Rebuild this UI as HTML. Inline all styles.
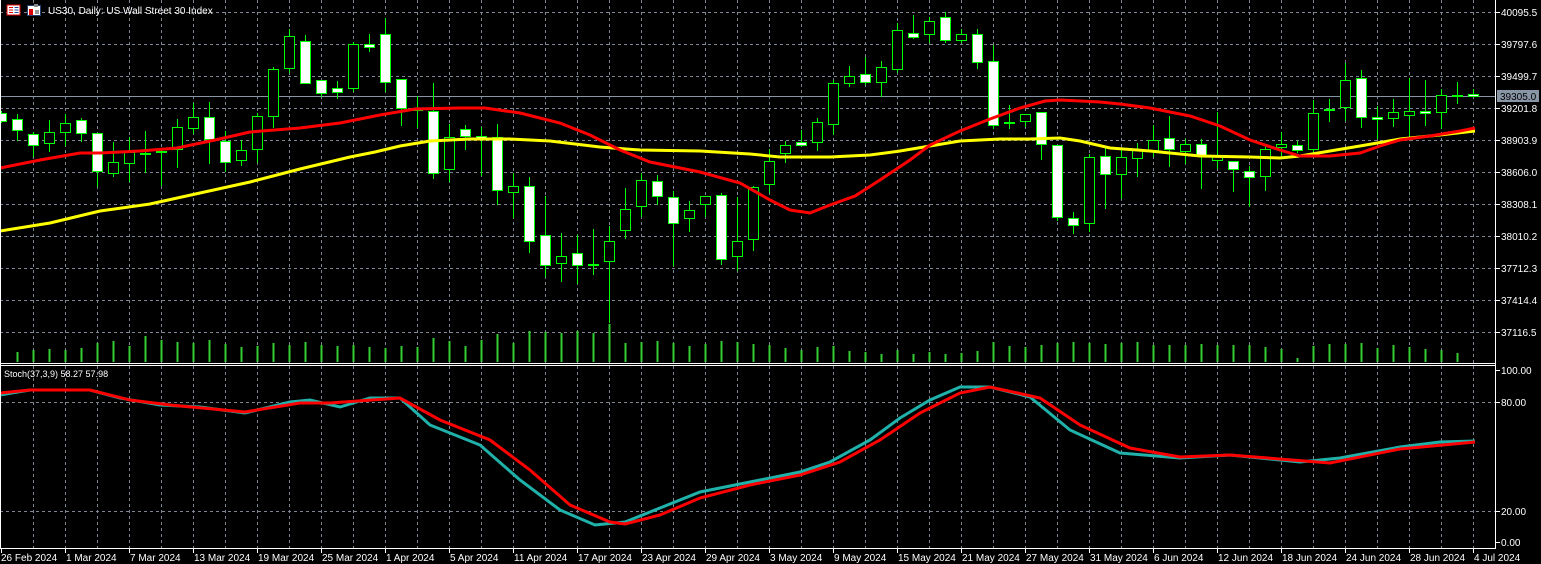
<!DOCTYPE html>
<html><head><meta charset="utf-8"><style>
html,body{margin:0;padding:0;background:#000;width:1541px;height:564px;overflow:hidden}
svg{display:block}
text{font-family:"Liberation Sans","DejaVu Sans",sans-serif;font-size:10px;fill:#fff}
.g{stroke:#7d8593;stroke-width:1;stroke-dasharray:3,3}
.wk{stroke:#00ff00;stroke-width:1}
.b{fill:#000;stroke:#00ff00;stroke-width:1}
.w{fill:#fff;stroke:#00ff00;stroke-width:1}
</style></head><body>
<svg width="1541" height="564" viewBox="0 0 1541 564" xmlns="http://www.w3.org/2000/svg">
<rect width="1541" height="564" fill="#000"/>
<!-- horizontal grid main -->
<g class="g">
<path d="M0 12.5H1495M0 44.5H1495M0 76.5H1495M0 108.5H1495M0 140.5H1495M0 172.5H1495M0 204.5H1495M0 236.5H1495M0 268.5H1495M0 300.5H1495M0 332.5H1495"/>
<path d="M0 402.5H1495M0 511.5H1495"/>
<path d="M33.5 0V363M65.5 0V363M97.5 0V363M129.5 0V363M161.5 0V363M193.5 0V363M225.5 0V363M257.5 0V363M289.5 0V363M321.5 0V363M353.5 0V363M385.5 0V363M417.5 0V363M449.5 0V363M481.5 0V363M513.5 0V363M545.5 0V363M577.5 0V363M609.5 0V363M641.5 0V363M673.5 0V363M705.5 0V363M737.5 0V363M769.5 0V363M801.5 0V363M833.5 0V363M865.5 0V363M897.5 0V363M929.5 0V363M961.5 0V363M993.5 0V363M1025.5 0V363M1057.5 0V363M1089.5 0V363M1121.5 0V363M1153.5 0V363M1185.5 0V363M1217.5 0V363M1249.5 0V363M1281.5 0V363M1313.5 0V363M1345.5 0V363M1377.5 0V363M1409.5 0V363M1441.5 0V363M1473.5 0V363"/>
<path d="M33.5 366V548M65.5 366V548M97.5 366V548M129.5 366V548M161.5 366V548M193.5 366V548M225.5 366V548M257.5 366V548M289.5 366V548M321.5 366V548M353.5 366V548M385.5 366V548M417.5 366V548M449.5 366V548M481.5 366V548M513.5 366V548M545.5 366V548M577.5 366V548M609.5 366V548M641.5 366V548M673.5 366V548M705.5 366V548M737.5 366V548M769.5 366V548M801.5 366V548M833.5 366V548M865.5 366V548M897.5 366V548M929.5 366V548M961.5 366V548M993.5 366V548M1025.5 366V548M1057.5 366V548M1089.5 366V548M1121.5 366V548M1153.5 366V548M1185.5 366V548M1217.5 366V548M1249.5 366V548M1281.5 366V548M1313.5 366V548M1345.5 366V548M1377.5 366V548M1409.5 366V548M1441.5 366V548M1473.5 366V548"/>
</g>
<!-- current price line -->
<path d="M0 96.5H1495" stroke="#8795a5" stroke-width="1"/>
<!-- volumes -->
<path stroke="#32cd32" stroke-width="2" fill="none" d="M17.5 352V362M33.5 350V362M49.5 349V362M65.5 350V362M81.5 348V362M97.5 343V362M113.5 341V362M129.5 346V362M145.5 336V362M161.5 340V362M177.5 342V362M193.5 343V362M209.5 340V362M225.5 344V362M241.5 347V362M257.5 346V362M273.5 343V362M289.5 345V362M305.5 342V362M321.5 345V362M337.5 346V362M353.5 345V362M369.5 347V362M385.5 348V362M401.5 346V362M417.5 347V362M433.5 338V362M449.5 341V362M465.5 346V362M481.5 340V362M497.5 334V362M513.5 343V362M529.5 331V362M545.5 332V362M561.5 333V362M577.5 331V362M593.5 333V362M609.5 324V362M625.5 343V362M641.5 342V362M657.5 341V362M673.5 343V362M689.5 346V362M705.5 344V362M721.5 341V362M737.5 342V362M753.5 344V362M769.5 345V362M785.5 348V362M801.5 350V362M817.5 347V362M833.5 346V362M849.5 351V362M865.5 352V362M881.5 354V362M897.5 350V362M913.5 354V362M929.5 352V362M945.5 354V362M961.5 353V362M977.5 351V362M993.5 342V362M1009.5 346V362M1025.5 347V362M1041.5 345V362M1057.5 343V362M1073.5 342V362M1089.5 343V362M1105.5 344V362M1121.5 343V362M1137.5 342V362M1153.5 345V362M1169.5 345V362M1185.5 345V362M1201.5 344V362M1217.5 345V362M1233.5 345V362M1249.5 345V362M1265.5 347V362M1281.5 349V362M1297.5 358V362M1313.5 346V362M1329.5 344V362M1345.5 344V362M1361.5 343V362M1377.5 348V362M1393.5 345V362M1409.5 347V362M1425.5 349V362M1441.5 350V362M1457.5 353V362"/>
<!-- wicks -->
<path class="wk" d="M1.5 111V123M17.5 114V141M33.5 132V157M49.5 120V152M65.5 114V146M81.5 118V142M97.5 133V187M113.5 142V177M129.5 137V182M145.5 131V173M161.5 149V186M177.5 119V168M193.5 103V134M209.5 102V164M225.5 131V172M241.5 140V166M257.5 113V163M273.5 67V128M289.5 29V73M305.5 35V83M321.5 80V97M337.5 81V99M353.5 42V92M369.5 34V52M385.5 18V92M401.5 79V126M417.5 96V128M433.5 83V179M449.5 124V182M465.5 125V150M481.5 127V176M497.5 124V205M513.5 173V218M529.5 177V253M545.5 196V277M561.5 233V282M577.5 235V284M593.5 229V275M609.5 226V323M625.5 188V239M641.5 173V217M657.5 175V205M673.5 191V266M689.5 201V232M705.5 196V217M721.5 193V265M737.5 197V271M753.5 186V251M769.5 149V193M785.5 141V163M801.5 130V147M817.5 118V151M833.5 80V135M849.5 66V87M865.5 57V85M881.5 61V97M897.5 23V73M913.5 15V39M929.5 17V43M945.5 12V43M961.5 29V43M977.5 29V69M993.5 45V129M1009.5 105V129M1025.5 114V127M1041.5 112V160M1057.5 145V221M1073.5 212V234M1089.5 154V232M1105.5 148V209M1121.5 149V199M1137.5 143V177M1153.5 125V157M1169.5 116V167M1185.5 139V164M1201.5 139V189M1217.5 112V169M1233.5 161V192M1249.5 166V207M1265.5 144V191M1281.5 132V156M1297.5 141V153M1313.5 100V154M1329.5 99V122M1345.5 63V121M1361.5 70V128M1377.5 106V139M1393.5 99V127M1409.5 78V137M1425.5 80V126M1441.5 89V129M1457.5 82V104M1473.5 89V97"/>
<!-- dojis -->
<path stroke="#00ff00" stroke-width="2" d="M140 154H151M156 152H167M412 110H423M588 265H599M1004 123H1015M1324 110H1335M1452 96H1463"/>
<!-- bodies -->
<rect class="w" x="-3.5" y="113.5" width="10" height="8"/>
<rect class="w" x="12.5" y="119.5" width="10" height="11"/>
<rect class="w" x="28.5" y="134.5" width="10" height="11"/>
<rect class="b" x="44.5" y="132.5" width="10" height="11"/>
<rect class="b" x="60.5" y="123.5" width="10" height="9"/>
<rect class="w" x="76.5" y="120.5" width="10" height="13"/>
<rect class="w" x="92.5" y="133.5" width="10" height="38"/>
<rect class="b" x="108.5" y="162.5" width="10" height="11"/>
<rect class="b" x="124.5" y="152.5" width="10" height="11"/>
<rect class="b" x="172.5" y="127.5" width="10" height="22"/>
<rect class="b" x="188.5" y="117.5" width="10" height="11"/>
<rect class="w" x="204.5" y="117.5" width="10" height="22"/>
<rect class="w" x="220.5" y="141.5" width="10" height="21"/>
<rect class="b" x="236.5" y="150.5" width="10" height="10"/>
<rect class="b" x="252.5" y="116.5" width="10" height="33"/>
<rect class="b" x="268.5" y="69.5" width="10" height="47"/>
<rect class="b" x="284.5" y="36.5" width="10" height="32"/>
<rect class="w" x="300.5" y="41.5" width="10" height="42"/>
<rect class="w" x="316.5" y="80.5" width="10" height="13"/>
<rect class="w" x="332.5" y="88.5" width="10" height="4"/>
<rect class="b" x="348.5" y="44.5" width="10" height="44"/>
<rect class="w" x="364.5" y="44.5" width="10" height="3"/>
<rect class="w" x="380.5" y="34.5" width="10" height="48"/>
<rect class="w" x="396.5" y="79.5" width="10" height="29"/>
<rect class="w" x="428.5" y="111.5" width="10" height="62"/>
<rect class="b" x="444.5" y="137.5" width="10" height="32"/>
<rect class="w" x="460.5" y="129.5" width="10" height="7"/>
<rect class="w" x="476.5" y="136.5" width="10" height="2"/>
<rect class="w" x="492.5" y="137.5" width="10" height="53"/>
<rect class="b" x="508.5" y="186.5" width="10" height="6"/>
<rect class="w" x="524.5" y="186.5" width="10" height="55"/>
<rect class="w" x="540.5" y="235.5" width="10" height="30"/>
<rect class="b" x="556.5" y="256.5" width="10" height="7"/>
<rect class="w" x="572.5" y="253.5" width="10" height="12"/>
<rect class="b" x="604.5" y="241.5" width="10" height="20"/>
<rect class="b" x="620.5" y="209.5" width="10" height="21"/>
<rect class="b" x="636.5" y="180.5" width="10" height="26"/>
<rect class="w" x="652.5" y="181.5" width="10" height="15"/>
<rect class="w" x="668.5" y="197.5" width="10" height="26"/>
<rect class="b" x="684.5" y="210.5" width="10" height="8"/>
<rect class="b" x="700.5" y="196.5" width="10" height="8"/>
<rect class="w" x="716.5" y="195.5" width="10" height="64"/>
<rect class="b" x="732.5" y="241.5" width="10" height="15"/>
<rect class="b" x="748.5" y="187.5" width="10" height="52"/>
<rect class="b" x="764.5" y="161.5" width="10" height="23"/>
<rect class="b" x="780.5" y="145.5" width="10" height="8"/>
<rect class="w" x="796.5" y="142.5" width="10" height="3"/>
<rect class="b" x="812.5" y="122.5" width="10" height="20"/>
<rect class="b" x="828.5" y="83.5" width="10" height="41"/>
<rect class="b" x="844.5" y="76.5" width="10" height="7"/>
<rect class="w" x="860.5" y="74.5" width="10" height="8"/>
<rect class="b" x="876.5" y="67.5" width="10" height="15"/>
<rect class="b" x="892.5" y="30.5" width="10" height="39"/>
<rect class="w" x="908.5" y="33.5" width="10" height="4"/>
<rect class="b" x="924.5" y="21.5" width="10" height="13"/>
<rect class="w" x="940.5" y="17.5" width="10" height="23"/>
<rect class="b" x="956.5" y="34.5" width="10" height="6"/>
<rect class="w" x="972.5" y="34.5" width="10" height="28"/>
<rect class="w" x="988.5" y="61.5" width="10" height="64"/>
<rect class="b" x="1020.5" y="114.5" width="10" height="7"/>
<rect class="w" x="1036.5" y="112.5" width="10" height="32"/>
<rect class="w" x="1052.5" y="145.5" width="10" height="72"/>
<rect class="w" x="1068.5" y="218.5" width="10" height="7"/>
<rect class="b" x="1084.5" y="157.5" width="10" height="66"/>
<rect class="w" x="1100.5" y="156.5" width="10" height="18"/>
<rect class="b" x="1116.5" y="157.5" width="10" height="17"/>
<rect class="b" x="1132.5" y="149.5" width="10" height="9"/>
<rect class="b" x="1148.5" y="140.5" width="10" height="10"/>
<rect class="w" x="1164.5" y="138.5" width="10" height="11"/>
<rect class="b" x="1180.5" y="144.5" width="10" height="7"/>
<rect class="w" x="1196.5" y="144.5" width="10" height="11"/>
<rect class="b" x="1212.5" y="155.5" width="10" height="5"/>
<rect class="w" x="1228.5" y="161.5" width="10" height="8"/>
<rect class="w" x="1244.5" y="171.5" width="10" height="6"/>
<rect class="b" x="1260.5" y="149.5" width="10" height="27"/>
<rect class="b" x="1276.5" y="144.5" width="10" height="3"/>
<rect class="w" x="1292.5" y="145.5" width="10" height="5"/>
<rect class="b" x="1308.5" y="113.5" width="10" height="36"/>
<rect class="b" x="1340.5" y="80.5" width="10" height="27"/>
<rect class="w" x="1356.5" y="78.5" width="10" height="39"/>
<rect class="w" x="1372.5" y="117.5" width="10" height="2"/>
<rect class="b" x="1388.5" y="112.5" width="10" height="6"/>
<rect class="b" x="1404.5" y="111.5" width="10" height="4"/>
<rect class="w" x="1420.5" y="111.5" width="10" height="2"/>
<rect class="b" x="1436.5" y="95.5" width="10" height="17"/>
<rect class="w" x="1468.5" y="94.5" width="10" height="2"/>
<!-- MAs -->
<polyline fill="none" stroke="#ffff00" stroke-width="3" points="0,231 50,223 100,211 150,204 200,193 250,182 300,169 350,157 375,152 400,146 430,141 470,139 510,139 550,141 600,147 640,150 700,151 750,154 780,157 830,157 870,155 900,151 930,146 960,141 1000,139 1030,139 1060,138 1080,141 1110,148 1150,151 1200,156 1250,157 1280,158 1300,156 1330,151 1360,146 1400,139 1440,135 1475,131"/>
<polyline fill="none" stroke="#ff0000" stroke-width="3" points="0,168 40,160 80,153 100,153 140,151 177,148 215,140 250,132 300,128 340,123 380,115 415,109 460,108 485,108 520,113 560,123 590,135 620,150 650,162 700,172 740,183 770,200 790,210 810,213 830,205 855,196 880,180 910,160 930,145 960,131 990,119 1020,108 1045,101 1060,100 1100,102 1120,104 1150,108 1190,116 1220,126 1250,140 1280,150 1300,156 1330,156 1360,153 1380,146 1400,140 1430,136 1460,131 1475,128"/>
<!-- stoch -->
<polyline fill="none" stroke="#20b2aa" stroke-width="3" points="0,395 30,390 90,390 120,398 160,405 200,407 245,413 290,402 310,400 340,407 370,398 400,398 430,425 480,445 520,480 560,510 595,525 625,522 650,512 700,492 750,482 800,472 830,462 870,440 900,418 930,400 960,387 990,387 1030,397 1070,430 1120,453 1180,458 1230,455 1300,462 1340,458 1400,447 1440,442 1475,441"/>
<polyline fill="none" stroke="#ff0000" stroke-width="3" points="0,393 30,390 90,390 130,400 170,405 245,412 300,403 330,403 400,398 440,420 490,440 530,470 570,505 610,522 625,524 660,515 700,498 750,485 800,475 840,462 880,440 920,413 960,393 990,387 1040,398 1080,425 1130,448 1180,457 1230,455 1330,463 1400,449 1475,442"/>
<!-- borders -->
<path d="M0.5 0V548M1495.5 0V548M0 363.5H1495M0 365.5H1495M0 548.5H1496" stroke="#fff" stroke-width="1" fill="none"/>
<!-- axis ticks -->
<path stroke="#fff" d="M1495 12.5H1500M1495 44.5H1500M1495 76.5H1500M1495 108.5H1500M1495 140.5H1500M1495 172.5H1500M1495 204.5H1500M1495 236.5H1500M1495 268.5H1500M1495 300.5H1500M1495 332.5H1500M1495 370.5H1500M1495 402.5H1500M1495 511.5H1500M1495 542.5H1500"/>
<path stroke="#fff" d="M1.5 548V553M65.5 548V553M129.5 548V553M193.5 548V553M257.5 548V553M321.5 548V553M385.5 548V553M449.5 548V553M513.5 548V553M577.5 548V553M641.5 548V553M705.5 548V553M769.5 548V553M833.5 548V553M897.5 548V553M961.5 548V553M1025.5 548V553M1089.5 548V553M1153.5 548V553M1217.5 548V553M1281.5 548V553M1345.5 548V553M1409.5 548V553M1473.5 548V553"/>
<g>
<text x="1501" y="16">40095.5</text><text x="1501" y="48">39797.6</text><text x="1501" y="80">39499.7</text>
<text x="1501" y="112">39201.8</text><text x="1501" y="144">38903.9</text><text x="1501" y="176">38606.0</text>
<text x="1501" y="208">38308.1</text><text x="1501" y="240">38010.2</text><text x="1501" y="272">37712.3</text>
<text x="1501" y="304">37414.4</text><text x="1501" y="336">37116.5</text>
<text x="1501" y="374">100.00</text><text x="1501" y="406">80.00</text><text x="1501" y="515">20.00</text><text x="1501" y="546">0.00</text>
</g>
<rect x="1497" y="90" width="42" height="12" fill="#8795a5"/>
<text x="1500" y="100" style="fill:#000">39305.0</text>
<g>
<text x="1" y="561">26 Feb 2024</text><text x="66" y="561">1 Mar 2024</text><text x="130" y="561">7 Mar 2024</text>
<text x="194" y="561">13 Mar 2024</text><text x="258" y="561">19 Mar 2024</text><text x="322" y="561">25 Mar 2024</text>
<text x="386" y="561">1 Apr 2024</text><text x="450" y="561">5 Apr 2024</text><text x="514" y="561">11 Apr 2024</text>
<text x="578" y="561">17 Apr 2024</text><text x="642" y="561">23 Apr 2024</text><text x="706" y="561">29 Apr 2024</text>
<text x="770" y="561">3 May 2024</text><text x="834" y="561">9 May 2024</text><text x="898" y="561">15 May 2024</text>
<text x="962" y="561">21 May 2024</text><text x="1026" y="561">27 May 2024</text><text x="1090" y="561">31 May 2024</text>
<text x="1154" y="561">6 Jun 2024</text><text x="1218" y="561">12 Jun 2024</text><text x="1282" y="561">18 Jun 2024</text>
<text x="1346" y="561">24 Jun 2024</text><text x="1410" y="561">28 Jun 2024</text><text x="1474" y="561">4 Jul 2024</text>
</g>
<!-- title & icons -->
<rect x="7" y="5" width="13" height="10" fill="#fff" stroke="#d00" stroke-width="1"/>
<path d="M9 7.5H13M9 10H13M9 12.5H13" stroke="#d00"/><path d="M14.5 7.5H18.5M14.5 10H18.5M14.5 12.5H18.5" stroke="#1f4f9f"/>
<rect x="27.5" y="5.5" width="13" height="10" fill="#fff" stroke="#1f3f6f"/>
<rect x="29" y="9" width="4" height="6" fill="#d00"/><rect x="34" y="4" width="4" height="3" fill="#888"/><rect x="35" y="10" width="4" height="4" fill="#999"/>
<text x="48" y="14" style="font-size:10px">US30, Daily:  US Wall Street 30 Index</text>
<text x="4" y="377" style="font-size:9px">Stoch(37,3,9) 58.27 57.98</text>
</svg>
</body></html>
